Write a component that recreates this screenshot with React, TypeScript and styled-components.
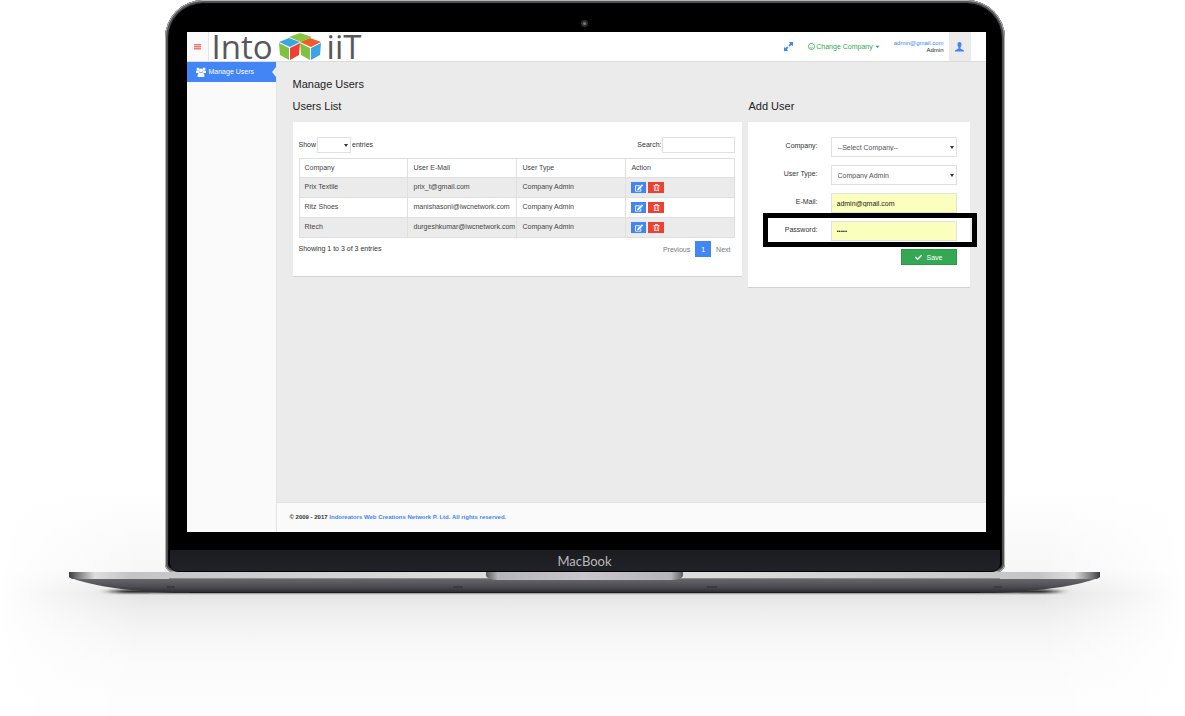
import React from "react";
import styled, { createGlobalStyle } from "styled-components";
import { FaCheck, FaRegTrashAlt, FaEdit, FaRegSmile, FaCaretDown } from "react-icons/fa";

const sans = `"Liberation Sans", Arial, sans-serif`;

const GlobalStyle = createGlobalStyle`
  *, *::before, *::after { box-sizing: border-box; }
  body { margin: 0; background: #fff; font-family: ${sans}; color: #333; }
  h1, h2, p { margin: 0; font-weight: 400; }
  button, input, select { font-family: inherit; margin: 0; border-radius: 0; }
  a { color: #4285f4; text-decoration: none; }
`;

const Stage = styled.div`
  min-height: 100vh;
  padding-right: 16px;
  display: flex;
  flex-direction: column;
  align-items: center;
  background:
    linear-gradient(90deg, #fff 0, transparent 12%, transparent 88%, #fff 100%),
    linear-gradient(#fff 0 490px, #f7f7f7 570px, #e4e4e4 594px, #efefef 614px, #f6f6f6 636px, #fafafa 660px, #fdfdfd 700px);
`;

const Lid = styled.div`
  position: relative;
  width: calc(100% - 329px);
  min-width: 700px;
  padding: 32px 19px 0 22px;
  background: #000;
  border-radius: 38px 38px 8px 8px;
  box-shadow: inset 0 0 0 1px #b4b4b6, inset 0 0 1px 3px #55555a;
`;

const Camera = styled.span`
  position: absolute;
  top: 20px;
  left: 50%;
  width: 7px;
  height: 7px;
  margin-left: -4px;
  border: 2px solid #2e2e30;
  border-radius: 50%;
  background: #77777c;
`;

const Chin = styled.div`
  height: 22px;
  margin: 18px -14px 0 -17px;
  background: linear-gradient(#1c1c20, #202227);
  border-radius: 0 0 8px 8px;
  border-bottom: 1px solid #000;
  color: #b9b9bc;
  font: 13px/22px Lato, sans-serif;
  text-align: center;
`;

const Base = styled.svg`
  display: block;
  width: calc(100% - 138px);
  min-width: 890px;
  height: 23px;
  overflow: visible;
`;

const Screen = styled.div`
  display: flex;
  flex-direction: column;
  min-height: 500px;
  background: #ebebeb;
  font-size: 7px;
  line-height: 8px;
`;

const Header = styled.header`
  display: flex;
  height: 30px;
  background: #fff;
  border-bottom: 1px solid #dcdcdc;
`;

const MenuButton = styled.button`
  width: 22px;
  padding: 0;
  border: 0;
  border-right: 1px solid #e4e4e4;
  background: #fafafa;
  display: grid;
  place-items: center;
`;

const Brand = styled.a`
  display: flex;
  align-items: center;
  gap: 6px;
  margin-left: 3px;
  color: #58585a;
  font: 33px/30px "Open Sans", sans-serif;
  svg { display: block; }
`;

const HeaderTools = styled.div`
  display: flex;
  align-items: center;
  margin-left: auto;
  padding-right: 15px;
`;

const IconButton = styled.button`
  display: flex;
  padding: 0;
  border: 0;
  background: none;
  color: #4285f4;
`;

const CompanySwitch = styled.button`
  display: flex;
  align-items: center;
  gap: 1px;
  margin: 0 13px 0 15px;
  padding: 0;
  border: 0;
  background: none;
  color: #34a853;
  font-size: 7px;
  line-height: 10px;
`;

const Account = styled.div`
  text-align: right;
  line-height: 7px;
  color: #222;
  font-size: 6px;
  a { display: block; }
  small { display: block; font-size: 6px; }
`;

const Avatar = styled.button`
  display: grid;
  place-items: center;
  align-self: stretch;
  width: 22px;
  margin-left: 5px;
  padding: 0;
  border: 0;
  background: #ebebeb;
  color: #4285f4;
`;

const Body = styled.div`
  display: flex;
  flex: 1;
`;

const Sidebar = styled.nav`
  width: 90px;
  flex: none;
  background: #fafafa;
  border-right: 1px solid #e4e4e4;
`;

const NavItem = styled.a`
  position: relative;
  display: flex;
  align-items: center;
  gap: 3px;
  height: 20px;
  padding-left: 9px;
  background: #4285f4;
  color: #fff;
  &::after {
    content: "";
    position: absolute;
    right: 0;
    top: 5px;
    border: 5px solid transparent;
    border-left-width: 0;
    border-right: 4px solid #ebebeb;
  }
`;

const Content = styled.div`
  display: flex;
  flex: 1;
  flex-direction: column;
  min-width: 0;
`;

const Main = styled.main`
  flex: 1;
  padding: 14px 16px;
`;

const PageTitle = styled.h1`
  font-size: 11px;
  line-height: 16px;
  color: #222;
`;

const Columns = styled.div`
  display: grid;
  grid-template-columns: 452fr 222fr;
  gap: 6px;
  align-items: start;
  margin-top: 6px;
`;

const SectionTitle = styled.h2`
  margin-bottom: 8px;
  font-size: 11px;
  line-height: 16px;
  color: #222;
`;

const Card = styled.div<{ $pad: string }>`
  padding: ${(p) => p.$pad};
  background: #fff;
  border-bottom: 1px solid #d2d2d2;
`;

const Bar = styled.div`
  display: flex;
  align-items: center;
  justify-content: space-between;
`;

const Inline = styled.label`
  display: flex;
  align-items: center;
  gap: 1px;
`;

const SelectBox = styled.span<{ $w: string }>`
  position: relative;
  display: block;
  width: ${(p) => p.$w};
  &::after {
    content: "";
    position: absolute;
    right: 3px;
    top: calc(50% - 1px);
    border: 2px solid transparent;
    border-top: 3px solid #333;
    border-bottom: 0;
    pointer-events: none;
  }
`;

const Select = styled.select<{ $h: number }>`
  appearance: none;
  display: block;
  width: 100%;
  height: ${(p) => p.$h}px;
  padding: 0 6px;
  border: 1px solid #e0e0e0;
  background: #fff;
  color: #555;
  font-size: 7px;
`;

const Input = styled.input<{ $w: string; $h: number; $filled?: boolean }>`
  width: ${(p) => p.$w};
  height: ${(p) => p.$h}px;
  padding: 0 5px;
  border: 1px solid #e0e0e0;
  background: ${(p) => (p.$filled ? "#faffbd" : "#fff")};
  color: #222;
  font-size: ${(p) => (p.type === "password" ? 6 : 7)}px;
`;

const Table = styled.table`
  width: 100%;
  margin: 5px 0 3px;
  border-collapse: collapse;
  table-layout: fixed;
  th, td {
    height: 20px;
    padding: 0 5px;
    border: 1px solid #dfdfdf;
    text-align: left;
    font-weight: 400;
    color: #444;
  }
  td:nth-child(2) { padding-right: 0; }
  th { height: 19px; }
  td { padding-bottom: 2px; }
  td:last-child { padding-bottom: 0; }
  tbody tr:nth-child(odd) { background: #ebebeb; }
`;

const Actions = styled.div`
  display: flex;
  gap: 2px;
`;

const ActionButton = styled.button<{ $color: string; $w: number }>`
  display: grid;
  place-items: center;
  width: ${(p) => p.$w}px;
  height: 11px;
  padding: 0;
  border: 0;
  background: ${(p) => p.$color};
  color: #fff;
`;

const Pager = styled.div`
  display: flex;
  align-items: center;
  gap: 5px;
  padding-right: 5px;
`;

const PageButton = styled.button<{ $active?: boolean }>`
  height: 16px;
  padding: ${(p) => (p.$active ? "0 6px" : "0")};
  border: 0;
  background: ${(p) => (p.$active ? "#4285f4" : "none")};
  color: ${(p) => (p.$active ? "#fff" : "#777")};
  font-size: 7px;
`;

const Form = styled.form`
  display: flex;
  flex-direction: column;
  gap: 8px;
`;

const Field = styled.div`
  position: relative;
  display: flex;
  align-items: center;
  justify-content: flex-end;
  gap: 13px;
  label { padding-bottom: 2px; }
`;

const Highlight = styled.span`
  position: absolute;
  inset: -8px -20px -6px 0;
  border: 5px solid #000;
  pointer-events: none;
`;

const SaveButton = styled.button`
  display: flex;
  align-items: center;
  justify-content: center;
  align-self: flex-end;
  gap: 5px;
  width: 56px;
  height: 16px;
  padding: 0;
  border: 1px solid #2b9a48;
  background: #34a853;
  color: #fff;
  font-size: 7px;
`;

const Footer = styled.footer`
  height: 30px;
  padding-left: 13px;
  background: #fafafa;
  font-size: 6px;
  font-weight: 700;
  line-height: 29px;
  border-top: 1px solid #e2e2e2;
`;

const users = [
  ["Prix Textile", "prix_t@gmail.com", "Company Admin"],
  ["Ritz Shoes", "manishasoni@iwcnetwork.com", "Company Admin"],
  ["Rtech", "durgeshkumar@iwcnetwork.com", "Company Admin"],
];

function Cube({ x, y, top, left, right }: { x: number; y: number; top: string; left: string; right: string }) {
  return (
    <g transform={`translate(${x} ${y})`}>
      <path d="M0 4 10 0 21 4 11 9Z" fill={top} />
      <path d="M0 5 10 10V22L1 17Z" fill={left} />
      <path d="M11 10 21 5 20 17 11 22Z" fill={right} />
    </g>
  );
}

function Cubes() {
  return (
    <svg width="42" height="28" viewBox="0 0 42 28" aria-hidden="true">
      <Cube x={0} y={5} top="#3aa6e0" left="#7fc241" right="#ee4036" />
      <Cube x={21} y={5} top="#f15a29" left="#7fc241" right="#3aa6e0" />
      <path d="M10 4 21 0 33 4 22 9Z" fill="#8cc63f" />
    </svg>
  );
}

function UsersIcon() {
  return (
    <svg width="10" height="10" viewBox="0 0 20 20" fill="currentColor" aria-hidden="true">
      <circle cx="4" cy="4" r="3" />
      <circle cx="16" cy="4" r="3" />
      <path d="M0 12V9Q0 7 2 7H6Q5 10 7 12ZM20 12V9Q20 7 18 7H14Q15 10 13 12Z" />
      <circle cx="10" cy="7" r="4" />
      <path d="M3 18Q3 12 7 11Q10 13 13 11Q17 12 17 18Q17 20 15 20H5Q3 20 3 18Z" />
    </svg>
  );
}

function PersonIcon() {
  return (
    <svg width="9" height="10" viewBox="0 0 18 20" fill="currentColor" aria-hidden="true">
      <path d="M9 0C12 0 13 2 13 5C13 8 12 9 11 11V13C11 14 18 15 18 18V19H0V18C0 15 7 14 7 13V11C6 9 5 8 5 5C5 2 6 0 9 0Z" />
    </svg>
  );
}

function ResizeIcon() {
  return (
    <svg width="9" height="9" viewBox="0 0 18 18" fill="currentColor" aria-hidden="true">
      <path d="M10 0H18V8L15 6 11 9 9 7 12 3ZM8 18H0V10L3 12 6 9 9 11 6 15Z" />
    </svg>
  );
}

function LaptopBase() {
  return (
    <Base viewBox="0 0 1031 23" preserveAspectRatio="none" aria-hidden="true">
      <defs>
        <linearGradient id="deck">
          <stop offset="0" stopColor="#3c3c40" />
          <stop offset=".008" stopColor="#77777b" />
          <stop offset=".025" stopColor="#dededf" />
          <stop offset=".06" stopColor="#c4c4c7" />
          <stop offset=".38" stopColor="#dcdcdd" />
          <stop offset=".62" stopColor="#dcdcdd" />
          <stop offset=".94" stopColor="#c4c4c7" />
          <stop offset=".975" stopColor="#dededf" />
          <stop offset=".992" stopColor="#77777b" />
          <stop offset="1" stopColor="#3c3c40" />
        </linearGradient>
        <linearGradient id="belly" x2="0" y2="1">
          <stop offset="0" stopColor="#6d6d71" />
          <stop offset=".6" stopColor="#4d4c52" />
          <stop offset="1" stopColor="#2a292d" />
        </linearGradient>
        <linearGradient id="notch">
          <stop offset="0" stopColor="#5d5d60" />
          <stop offset=".06" stopColor="#b5b4b8" />
          <stop offset=".5" stopColor="#c9c7cd" />
          <stop offset=".94" stopColor="#b5b4b8" />
          <stop offset="1" stopColor="#5d5d60" />
        </linearGradient>
        <filter id="soft" x="-10%" y="-400%" width="120%" height="900%">
          <feGaussianBlur stdDeviation="8 1" />
        </filter>
      </defs>
      <path d="M45 18H986V21H45Z" fill="#111" filter="url(#soft)" />
      <path d="M0 5C18 13 55 19 105 21H926C976 19 1013 13 1031 5Z" fill="url(#belly)" />
      <path d="M120 20H911V21H120Z" fill="#1d1c20" />
      <path d="M80 21H951V22H80Z" fill="#a5a3a5" />
      <path d="M0 0H1031V5L1028 7H3L0 5Z" fill="url(#deck)" />
      <path d="M100 6H931V7H100Z" fill="#8a8a8d" />
      <path d="M417 0H614V4Q612 8 602 8H429Q419 8 417 4Z" fill="url(#notch)" />
      <path d="M98 15H106M384 15H394M638 15H648M925 15H933" stroke="#2c2b30" />
    </Base>
  );
}

export default function App() {
  return (
    <>
      <GlobalStyle />
      <Stage>
        <Lid>
          <Camera />
          <Screen>
            <Header>
              <MenuButton aria-label="Menu">
                <svg width="7" height="6" viewBox="0 0 7 6">
                  <path d="M0 0H7V6H0Z" fill="#f7b9b4" />
                  <path d="M0 .5H7M0 2.5H7M0 4.5H7" stroke="#ee7a72" />
                </svg>
              </MenuButton>
              <Brand href="#">
                <span>Into</span>
                <Cubes />
                <span>iiT</span>
              </Brand>
              <HeaderTools>
                <IconButton aria-label="Full screen"><ResizeIcon /></IconButton>
                <CompanySwitch>
                  <FaRegSmile size={7} />
                  Change Company
                  <FaCaretDown size={7} />
                </CompanySwitch>
                <Account>
                  <a href="#">admin@gmail.com</a>
                  <small>Admin</small>
                </Account>
                <Avatar aria-label="Account"><PersonIcon /></Avatar>
              </HeaderTools>
            </Header>
            <Body>
              <Sidebar>
                <NavItem href="#"><UsersIcon />Manage Users</NavItem>
              </Sidebar>
              <Content>
                <Main>
                  <PageTitle>Manage Users</PageTitle>
                  <Columns>
                    <section>
                      <SectionTitle>Users List</SectionTitle>
                      <Card $pad="15px 7px 19px 6px">
                        <Bar>
                          <Inline>
                            Show
                            <SelectBox $w="34px"><Select $h={16} aria-label="Entries shown" /></SelectBox>
                            entries
                          </Inline>
                          <Inline>Search: <Input $w="73px" $h={16} type="search" /></Inline>
                        </Bar>
                        <Table>
                          <thead>
                            <tr><th>Company</th><th>User E-Mail</th><th>User Type</th><th>Action</th></tr>
                          </thead>
                          <tbody>
                            {users.map((u) => (
                              <tr key={u[1]}>
                                {u.map((v) => <td key={v}>{v}</td>)}
                                <td>
                                  <Actions>
                                    <ActionButton $color="#4285f4" $w={15} aria-label="Edit"><FaEdit size={8} /></ActionButton>
                                    <ActionButton $color="#ea4335" $w={16} aria-label="Delete"><FaRegTrashAlt size={7} /></ActionButton>
                                  </Actions>
                                </td>
                              </tr>
                            ))}
                          </tbody>
                        </Table>
                        <Bar>
                          <p>Showing 1 to 3 of 3 entries</p>
                          <Pager>
                            <PageButton>Previous</PageButton>
                            <PageButton $active>1</PageButton>
                            <PageButton>Next</PageButton>
                          </Pager>
                        </Bar>
                      </Card>
                    </section>
                    <section>
                      <SectionTitle>Add User</SectionTitle>
                      <Card $pad="15px 13px 22px 15px">
                        <Form>
                          <Field>
                            <label htmlFor="company">Company:</label>
                            <SelectBox $w="126px">
                              <Select id="company" $h={20}><option>--Select Company--</option></Select>
                            </SelectBox>
                          </Field>
                          <Field>
                            <label htmlFor="type">User Type:</label>
                            <SelectBox $w="126px">
                              <Select id="type" $h={20}><option>Company Admin</option></Select>
                            </SelectBox>
                          </Field>
                          <Field>
                            <label htmlFor="email">E-Mail:</label>
                            <Input id="email" $w="126px" $h={20} $filled defaultValue="admin@gmail.com" />
                          </Field>
                          <Field>
                            <label htmlFor="password">Password:</label>
                            <Input id="password" type="password" $w="126px" $h={20} $filled defaultValue="admin" />
                            <Highlight />
                          </Field>
                          <SaveButton type="button"><FaCheck size={7} />Save</SaveButton>
                        </Form>
                      </Card>
                    </section>
                  </Columns>
                </Main>
                <Footer>
                  © 2009 - 2017 <a href="#">Indoreators Web Creations Network P. Ltd. All rights reserved.</a>
                </Footer>
              </Content>
            </Body>
          </Screen>
          <Chin>MacBook</Chin>
        </Lid>
        <LaptopBase />
      </Stage>
    </>
  );
}
